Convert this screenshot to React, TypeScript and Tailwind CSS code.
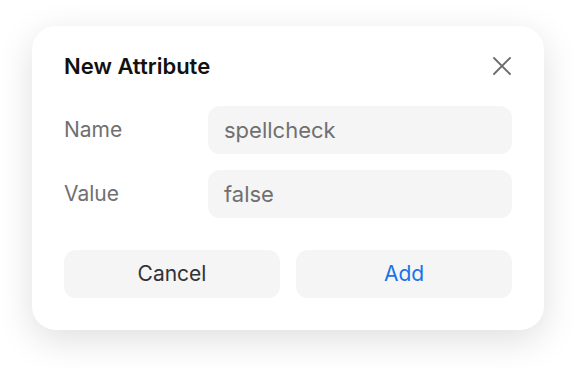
export default function App() {
  return (
    <div
      className="flex min-h-[368px] items-start justify-center bg-white pt-[26px]"
      style={{ fontFamily: "Inter, 'Noto Sans', sans-serif" }}
    >
      <div className="w-[512px] rounded-[24px] bg-white px-8 pb-8 pt-[26px] shadow-[0_10px_36px_rgba(0,0,0,0.13)]">
        <div className="mb-[26px] flex h-[28px] items-center justify-between">
          <h2 className="text-[22px] font-semibold leading-[28px] text-[#111]">New Attribute</h2>
          <button className="flex h-[20px] w-[20px] items-center justify-center" aria-label="Close">
            <svg width="18" height="18" viewBox="0 0 18 18" fill="none">
              <path d="M1 1L17 17M17 1L1 17" stroke="#6b6b6b" strokeWidth="1.8" strokeLinecap="round" />
            </svg>
          </button>
        </div>

        <div className="flex flex-col gap-4">
          <div className="flex items-center">
            <span className="w-[144px] text-[21px] text-[#707070]">Name</span>
            <div className="flex h-12 flex-1 items-center rounded-xl bg-[#f5f5f5] px-4 text-[22px] text-[#707070]">
              spellcheck
            </div>
          </div>
          <div className="flex items-center">
            <span className="w-[144px] text-[21px] text-[#707070]">Value</span>
            <div className="flex h-12 flex-1 items-center rounded-xl bg-[#f5f5f5] px-4 text-[22px] text-[#707070]">
              false
            </div>
          </div>
        </div>

        <div className="mt-8 grid grid-cols-2 gap-4">
          <button className="h-12 rounded-xl bg-[#f5f5f5] text-[21px] text-[#333]">Cancel</button>
          <button className="h-12 rounded-xl bg-[#f5f5f5] text-[21px] text-[#1a73e8]">Add</button>
        </div>
      </div>
    </div>
  );
}
